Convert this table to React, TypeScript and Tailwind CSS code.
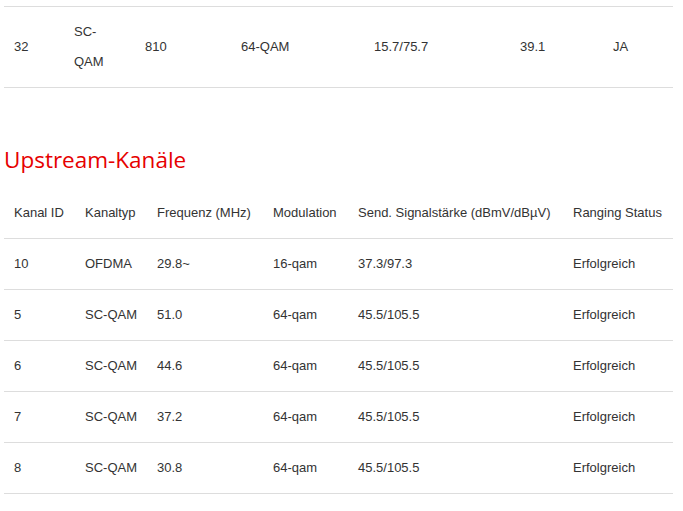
import React from "react";

const topCols = [60, 71, 96, 133, 146, 93, 70];
const topRow = ["32", "SC-QAM", "810", "64-QAM", "15.7/75.7", "39.1", "JA"];

const upCols = [71, 72, 116, 85, 215, 110];
const upHead = [
  "Kanal ID",
  "Kanaltyp",
  "Frequenz (MHz)",
  "Modulation",
  "Send. Signalstärke (dBmV/dBµV)",
  "Ranging Status",
];
const upRows = [
  ["10", "OFDMA", "29.8~", "16-qam", "37.3/97.3", "Erfolgreich"],
  ["5", "SC-QAM", "51.0", "64-qam", "45.5/105.5", "Erfolgreich"],
  ["6", "SC-QAM", "44.6", "64-qam", "45.5/105.5", "Erfolgreich"],
  ["7", "SC-QAM", "37.2", "64-qam", "45.5/105.5", "Erfolgreich"],
  ["8", "SC-QAM", "30.8", "64-qam", "45.5/105.5", "Erfolgreich"],
];

export default function App() {
  return (
    <div
      className="w-[683px] h-[511px] bg-white overflow-hidden pt-[6px] px-[4px] text-[13px] leading-[30px] text-[#333333]"
      style={{ fontFamily: '"Liberation Sans", Arial, sans-serif' }}
    >
      <table className="table-fixed w-[669px] border-collapse">
        <colgroup>
          {topCols.map((w, i) => (
            <col key={i} style={{ width: w }} />
          ))}
        </colgroup>
        <tbody>
          <tr className="border-y border-[#dddddd]">
            {topRow.map((c, i) => (
              <td key={i} className="py-[10px] pl-[10px] pr-[10px] align-middle text-left">
                {c}
              </td>
            ))}
          </tr>
        </tbody>
      </table>

      <h2
        className="mt-[57px] mb-[13px] text-[22.5px] leading-[30px] font-normal text-[#e60000]"
        style={{ fontFamily: '"Open Sans", "Noto Sans", sans-serif' }}
      >
        Upstream-Kanäle
      </h2>

      <table className="table-fixed w-[669px] border-collapse">
        <colgroup>
          {upCols.map((w, i) => (
            <col key={i} style={{ width: w }} />
          ))}
        </colgroup>
        <thead>
          <tr className="border-b border-[#dddddd]">
            {upHead.map((c, i) => (
              <th key={i} className="py-[10px] pl-[10px] pr-[4px] text-left font-normal whitespace-nowrap">
                {c}
              </th>
            ))}
          </tr>
        </thead>
        <tbody>
          {upRows.map((r, ri) => (
            <tr key={ri} className="border-b border-[#dddddd]">
              {r.map((c, i) => (
                <td key={i} className="py-[10px] pl-[10px] pr-[4px] text-left whitespace-nowrap">
                  {c}
                </td>
              ))}
            </tr>
          ))}
        </tbody>
      </table>
    </div>
  );
}
